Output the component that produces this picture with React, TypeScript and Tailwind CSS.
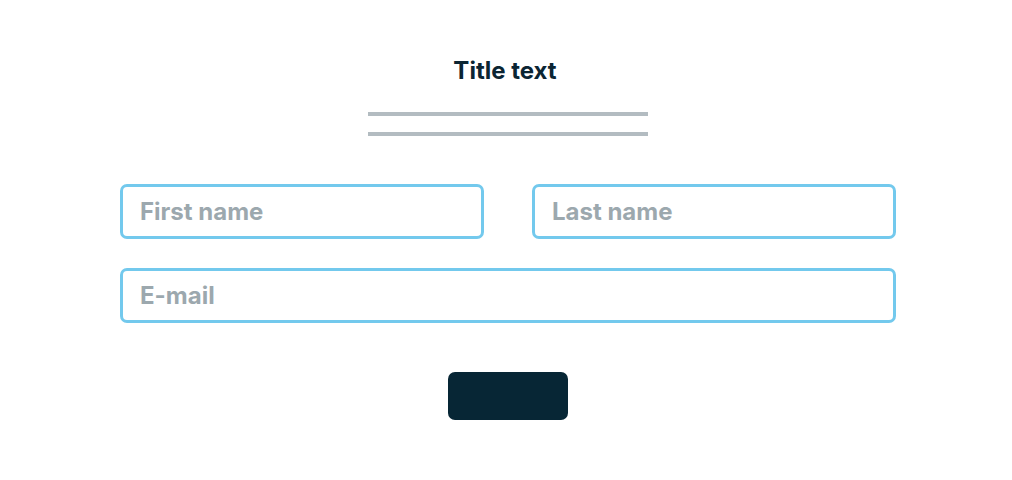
export default function App() {
  const font = { fontFamily: "Inter, 'Noto Sans', sans-serif" };
  return (
    <div className="w-[1012px] h-[480px] bg-white" style={font}>
      <div className="ml-[120px] w-[776px] flex flex-col items-center pt-[55px]">
        <h1 className="text-[24px] leading-[32px] font-bold text-[#0b2533] -ml-[6px]">Title text</h1>
        <div className="mt-[25px] w-[280px] h-[4px] bg-[#b3bcc1]" />
        <div className="mt-[16px] w-[280px] h-[4px] bg-[#b3bcc1]" />
        <div className="mt-[48px] w-full grid grid-cols-2 gap-x-[48px] gap-y-[29px]">
          <div className="h-[55px] border-[3px] border-[#73c9ed] rounded-[7px] flex items-center px-[17px] text-[24px] font-bold text-[#9ca8ae]">
            First name
          </div>
          <div className="h-[55px] border-[3px] border-[#73c9ed] rounded-[7px] flex items-center px-[17px] text-[24px] font-bold text-[#9ca8ae]">
            Last name
          </div>
          <div className="col-span-2 h-[55px] border-[3px] border-[#73c9ed] rounded-[7px] flex items-center px-[17px] text-[24px] font-bold text-[#9ca8ae]">
            E-mail
          </div>
        </div>
        <div className="mt-[49px] w-[120px] h-[48px] rounded-[7px] bg-[#072635]" />
      </div>
    </div>
  );
}
